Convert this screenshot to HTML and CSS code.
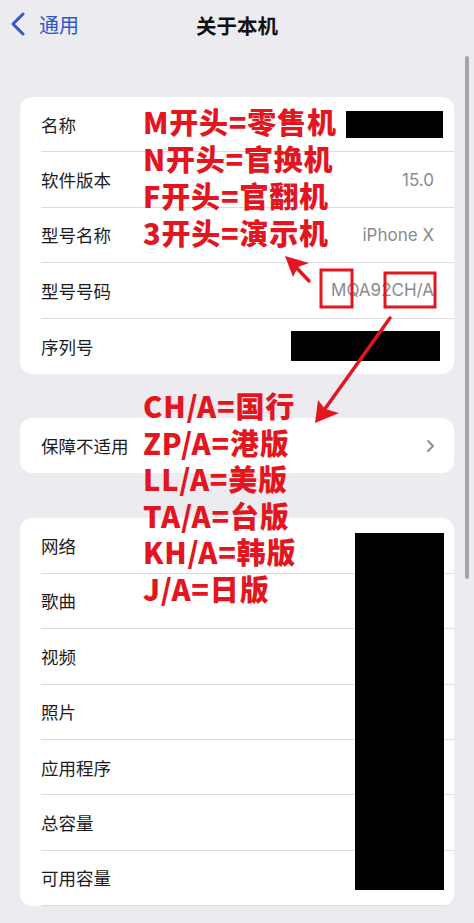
FILE: index.html
```html
<!DOCTYPE html>
<html lang="zh-CN">
<head>
  <meta charset="UTF-8">
  <title>关于本机</title>
  <link rel="stylesheet" href="styles.css">
</head>
<body>
  <div class="screen">
    <header class="nav">
      <a class="back" href="#">
        <svg width="16" height="24" viewBox="0 0 16 24"><path d="M13 2 L3 12 L13 22" fill="none" stroke="#3258c6" stroke-width="3" stroke-linecap="round" stroke-linejoin="round"/></svg>
        <span>通用</span>
      </a>
      <h1>关于本机</h1>
      <span></span>
    </header>

    <section class="group">
      <div class="row"><span class="label">名称</span><span class="redact redact-name"></span></div>
      <div class="row"><span class="label">软件版本</span><span class="value">15.0</span></div>
      <div class="row"><span class="label">型号名称</span><span class="value">iPhone X</span></div>
      <div class="row"><span class="label">型号号码</span><span class="value">MQA92CH/A</span></div>
      <div class="row"><span class="label">序列号</span><span class="redact redact-serial"></span></div>
    </section>

    <section class="group group-single">
      <div class="row"><span class="label">保障不适用</span>
        <svg class="chev" width="9" height="14" viewBox="0 0 9 14"><path d="M2 2 L7 7 L2 12" fill="none" stroke="#8e8e93" stroke-width="2" stroke-linecap="round" stroke-linejoin="round"/></svg>
      </div>
    </section>

    <section class="group group-storage">
      <div class="row"><span class="label">网络</span></div>
      <div class="row"><span class="label">歌曲</span></div>
      <div class="row"><span class="label">视频</span></div>
      <div class="row"><span class="label">照片</span></div>
      <div class="row"><span class="label">应用程序</span></div>
      <div class="row"><span class="label">总容量</span></div>
      <div class="row"><span class="label">可用容量</span></div>
      <div class="redact redact-storage"></div>
    </section>

    <div class="notes notes-model">
      <div>M开头=零售机</div>
      <div>N开头=官换机</div>
      <div>F开头=官翻机</div>
      <div>3开头=演示机</div>
    </div>

    <div class="notes notes-region">
      <div>CH/A=国行</div>
      <div>ZP/A=港版</div>
      <div>LL/A=美版</div>
      <div>TA/A=台版</div>
      <div>KH/A=韩版</div>
      <div>J/A=日版</div>
    </div>

    <svg class="marks" width="474" height="923" viewBox="0 0 474 923">
      <rect x="321" y="270" width="31" height="37" fill="none" stroke="#e3161f" stroke-width="3"/>
      <rect x="385" y="273" width="50" height="34" fill="none" stroke="#e3161f" stroke-width="3"/>
      <line x1="309" y1="281" x2="293" y2="264" stroke="#e3161f" stroke-width="3.5" stroke-linecap="round"/>
      <polygon points="285,256 309,263 298,267 293,277" fill="#e3161f"/>
      <line x1="390" y1="318" x2="322" y2="413" stroke="#e3161f" stroke-width="3.5" stroke-linecap="round"/>
      <polygon points="315,423 318,400 325,409 339,413" fill="#e3161f"/>
    </svg>

    <div class="scrollbar"></div>
  </div>
</body>
</html>
```

FILE: styles.css
```css
* {
  box-sizing: border-box;
}

body {
  margin: 0;
  background: #ebebf0;
  font-family: "Noto Sans CJK SC", "Noto Sans", sans-serif;
}

.screen {
  position: relative;
  width: 474px;
  height: 923px;
  overflow: hidden;
  background: #ebebf0;
}

.nav {
  height: 48px;
  display: grid;
  grid-template-columns: 1fr auto 1fr;
  align-items: center;
  padding: 0 10px;
}

.back {
  display: flex;
  align-items: center;
  gap: 13px;
  color: #3258c6;
  text-decoration: none;
  font-size: 20px;
}

.nav h1 {
  margin: 0;
  font-size: 20.5px;
  font-weight: 700;
  color: #111;
  padding-top: 2px;
}

.group {
  position: relative;
  margin: 49px 20px 0;
  padding-left: 21px;
  background: #fff;
  border-radius: 12px;
  overflow: hidden;
}

.group-single {
  margin-top: 44px;
}

.group-storage {
  margin-top: 45px;
}

.row {
  height: 55.4px;
  display: flex;
  align-items: center;
  justify-content: space-between;
  padding-right: 20px;
  border-bottom: 1px solid #dcdce0;
}

.row:last-of-type {
  border-bottom: none;
}

.label {
  font-size: 17.5px;
  color: #1c1c1e;
}

.value {
  font-family: Inter, "Noto Sans", sans-serif;
  font-size: 17px;
  color: #8a8a8e;
}

.chev {
  margin-right: -1px;
}

.redact {
  background: #000;
}

.redact-name {
  width: 97px;
  height: 27px;
  margin-right: -9px;
}

.redact-serial {
  width: 149px;
  height: 30px;
  margin-right: -6px;
}

.redact-storage {
  position: absolute;
  top: 15px;
  right: 10px;
  width: 89px;
  bottom: 16px;
}

.notes {
  position: absolute;
  left: 143px;
  color: #e3161f;
  font-size: 29px;
  font-weight: 900;
  line-height: 37px;
  letter-spacing: 0.8px;
}

.notes-model {
  top: 103px;
}

.notes-region {
  top: 387px;
  line-height: 36.6px;
}

.marks {
  position: absolute;
  top: 0;
  left: 0;
}

.scrollbar {
  position: absolute;
  top: 56px;
  left: 465px;
  width: 4px;
  height: 523px;
  border-radius: 2px;
  background: #a3a3a8;
}
```
